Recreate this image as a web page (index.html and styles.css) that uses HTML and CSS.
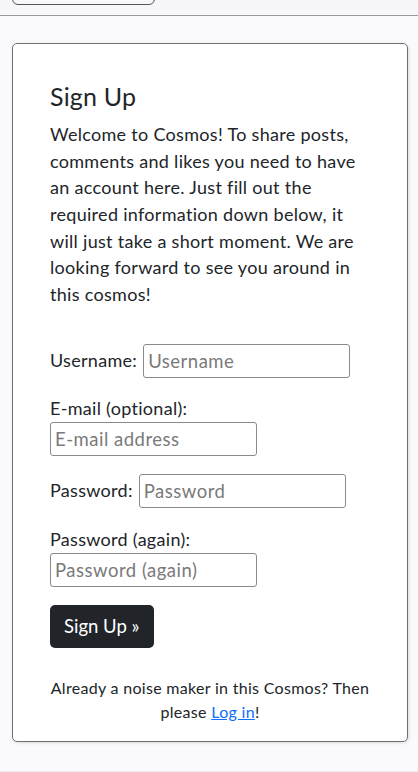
FILE: index.html
```html
<!DOCTYPE html>
<html lang="en">
<head>
<meta charset="utf-8">
<title>Sign Up - Cosmos</title>
<link rel="stylesheet" href="styles.css">
</head>
<body>
<header class="topbar">
  <button class="toggle" type="button">Menu</button>
</header>
<main class="main">
  <section class="card">
    <h2 class="title">Sign Up</h2>
    <p class="intro">Welcome to Cosmos! To share posts, comments and likes you need to have an account here. Just fill out the required information down below, it will just take a short moment. We are looking forward to see you around in this cosmos!</p>
    <form class="form">
      <p class="row inline"><label for="u">Username:</label> <input id="u" class="field" type="text" placeholder="Username"></p>
      <p class="row"><label for="e">E-mail (optional):</label><br><input id="e" class="field" type="email" placeholder="E-mail address"></p>
      <p class="row inline"><label for="p1">Password:</label> <input id="p1" class="field" type="password" placeholder="Password"></p>
      <p class="row"><label for="p2">Password (again):</label><br><input id="p2" class="field" type="password" placeholder="Password (again)"></p>
      <button class="submit" type="submit">Sign Up &raquo;</button>
    </form>
    <p class="login">Already a noise maker in this Cosmos? Then please <a href="#" class="link">Log in</a>!</p>
  </section>
</main>
<footer class="foot"></footer>
</body>
</html>
```
FILE: styles.css
```css
* { box-sizing: border-box; }
html, body { margin: 0; padding: 0; }
body {
  background: #fafafd;
  color: #212529;
  font-family: "Lato", "Noto Sans", sans-serif;
  font-size: 18px;
  letter-spacing: 0.3px;
}
.topbar {
  height: 16px;
  background: #f7f7fa;
  border-bottom: 1px solid #9a9a9e;
  display: flex;
  align-items: flex-end;
  padding: 0 0 10px 12px;
  overflow: hidden;
}
.toggle {
  flex: none;
  width: 143px;
  height: 44px;
  background: transparent;
  border: 1px solid #555;
  border-radius: 6px;
  font: inherit;
  color: #212529;
  padding: 0;
  line-height: 1;
}
.main {
  padding: 27px 10px 29px 12px;
}
.card {
  background: #fff;
  border: 1px solid #6f6f73;
  border-radius: 5px;
  box-shadow: 1px 1px 3px rgba(0,0,0,0.12);
  padding: 37px 37px 17px 37px;
}
.title {
  font-size: 25px;
  font-weight: 400;
  line-height: 30px;
  margin: 0 0 10px;
  letter-spacing: 0.2px;
}
.intro {
  margin: 0 0 36px;
  line-height: 26.67px;
}
.form { margin: 0; }
.row {
  margin: 0 0 18px;
  line-height: 27px;
}
.row:first-child { margin-bottom: 17px; }
.inline {
  display: flex;
  align-items: center;
  gap: 6px;
}
.field {
  width: 207px;
  height: 34px;
  border: 1px solid #8a8a8a;
  border-radius: 3px;
  font: inherit;
  font-size: 18.5px;
  letter-spacing: 0.5px;
  padding: 0 4px;
  color: #212529;
  background: #fff;
  vertical-align: top;
}
.field::placeholder { color: #7a7a7a; }
.submit {
  display: block;
  background: #212529;
  color: #fff;
  border: 0;
  border-radius: 5px;
  font: inherit;
  font-size: 18.5px;
  height: 43px;
  padding: 0 15px 0 14px;
  margin: 0 0 28px;
}
.login {
  margin: 0;
  text-align: center;
  font-size: 16px;
  line-height: 24px;
}
.link { color: #0d6efd; }
.foot {
  border-top: 1px solid #eeeef2;
  height: 10px;
  background: #fafafd;
}
```
